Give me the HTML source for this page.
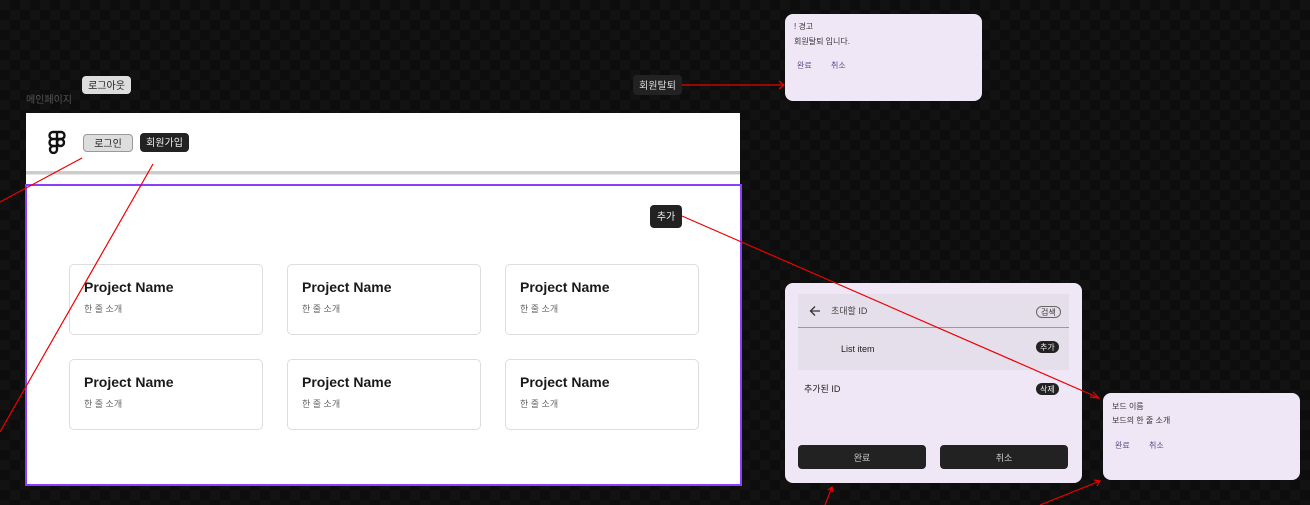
<!DOCTYPE html>
<html><head><meta charset="utf-8"><style>
*{margin:0;padding:0;box-sizing:border-box}
body{width:1310px;height:505px;overflow:hidden;background:#121212;position:relative;font-family:"Liberation Sans","Noto Sans CJK KR",sans-serif;
background-image:linear-gradient(45deg,#0d0d0d 25%,transparent 25%,transparent 75%,#0d0d0d 75%),linear-gradient(45deg,#0d0d0d 25%,transparent 25%,transparent 75%,#0d0d0d 75%);background-size:20px 20px;background-position:0 0,10px 10px}
.a{position:absolute}
.btn{position:absolute;font-size:10px;border-radius:4px;display:flex;align-items:center;justify-content:center;height:18px;line-height:1;padding-top:3px}
.card{position:absolute;width:194px;height:71px;border:1px solid #ddd;border-radius:5px;background:#fff}
.card b{position:absolute;left:14px;top:14px;font-size:14px;color:#1a1a1a}
.card span{position:absolute;left:14px;top:37px;font-size:9px;color:#666}
.dlg{position:absolute;background:#efe7f6;border-radius:8px}
.t{position:absolute;font-size:8px;color:#333;line-height:1}
.p{position:absolute;font-size:8px;color:#5a4a8a;line-height:1}
.pill{position:absolute;font-size:8px;border-radius:6px;height:12px;display:flex;align-items:center;padding:2px 4px 0;line-height:1}
</style></head><body>
<div class="a" style="left:26px;top:95px;font-size:10px;color:#555;line-height:12px">메인페이지</div>
<div class="btn" style="left:82px;top:76px;width:49px;background:#ddd;color:#222">로그아웃</div>
<div class="a" style="left:26px;top:113px;width:714px;height:372px;background:#fff"></div>
<div class="a" style="left:26px;top:171px;width:714px;height:4px;background:#ccc;border-bottom:1px solid #e6e6e6"></div>
<svg class="a" style="left:47px;top:130px" width="20" height="24" viewBox="0 0 20 24"><g fill="none" stroke="#111" stroke-width="2.4"><path d="M10 2H6a3.5 3.5 0 0 0 0 7h4zM10 2h4a3.5 3.5 0 0 1 0 7h-4zM10 9H6a3.5 3.5 0 0 0 0 7h4zM10 16H6a3.5 3.5 0 1 0 4 3.5z"/><circle cx="13.5" cy="12.5" r="3.5"/></g></svg>
<div class="btn" style="left:83px;top:134px;width:50px;background:#ddd;border:1px solid #999;color:#222">로그인</div>
<div class="btn" style="left:140px;top:133px;width:49px;height:19px;background:#222;color:#eee">회원가입</div>
<div class="a" style="left:25px;top:184px;width:717px;height:302px;border:2px solid #8a3ffc"></div>
<div class="btn" style="left:650px;top:205px;width:32px;height:23px;background:#222;color:#eee">추가</div>
<div class="card" style="left:69px;top:264px"><b>Project Name</b><span>한 줄 소개</span></div>
<div class="card" style="left:287px;top:264px"><b>Project Name</b><span>한 줄 소개</span></div>
<div class="card" style="left:505px;top:264px"><b>Project Name</b><span>한 줄 소개</span></div>
<div class="card" style="left:69px;top:359px"><b>Project Name</b><span>한 줄 소개</span></div>
<div class="card" style="left:287px;top:359px"><b>Project Name</b><span>한 줄 소개</span></div>
<div class="card" style="left:505px;top:359px"><b>Project Name</b><span>한 줄 소개</span></div>

<div class="btn" style="left:633px;top:75px;width:49px;height:20px;background:#222;color:#ddd">회원탈퇴</div>
<div class="dlg" style="left:785px;top:14px;width:197px;height:87px">
<div class="t" style="left:9px;top:9px">! 경고</div><div class="t" style="left:9px;top:24px">회원탈퇴 입니다.</div>
<div class="p" style="left:12px;top:48px">완료</div><div class="p" style="left:46px;top:48px">취소</div></div>

<div class="dlg" style="left:785px;top:283px;width:297px;height:200px">
<div class="a" style="left:13px;top:11px;width:271px;height:76px;background:#e5deeb"></div>
<div class="a" style="left:13px;top:44px;width:271px;height:1px;background:#999"></div>
<svg class="a" style="left:24px;top:22px" width="12" height="12" viewBox="0 0 12 12"><path d="M11 6H2M6 1.5L1.5 6 6 10.5" fill="none" stroke="#333" stroke-width="1.3"/></svg>
<div class="t" style="left:46px;top:24px;font-size:9px;color:#444">초대할 ID</div>
<div class="pill" style="left:251px;top:23px;border:1px solid #666;color:#333">검색</div>
<div class="t" style="left:56px;top:62px;font-size:9px;color:#222">List item</div>
<div class="pill" style="left:251px;top:58px;background:#222;color:#eee">추가</div>
<div class="t" style="left:19px;top:102px;font-size:9px;color:#222">추가된 ID</div>
<div class="pill" style="left:251px;top:100px;background:#222;color:#eee">삭제</div>
<div class="btn" style="left:13px;top:162px;width:128px;height:24px;background:#222;color:#ccc;font-size:9px">완료</div>
<div class="btn" style="left:155px;top:162px;width:128px;height:24px;background:#222;color:#ccc;font-size:9px">취소</div></div>

<div class="dlg" style="left:1103px;top:393px;width:197px;height:87px">
<div class="t" style="left:9px;top:10px">보드 이름</div><div class="t" style="left:9px;top:24px">보드의 한 줄 소개</div>
<div class="p" style="left:12px;top:49px">완료</div><div class="p" style="left:46px;top:49px">취소</div></div>

<svg class="a" style="left:0;top:0" width="1310" height="505"><g stroke="#e00" stroke-width="1.2" fill="none">
<path d="M82 158L0 202"/><path d="M153 164L0 432"/>
<path d="M682 216L1099 398M1090 397l9 1-6-6"/>
<path d="M682 85H784M779 81l5 4-5 4"/>
<path d="M825 505L832 487M828 490l4-3 1 5"/>
<path d="M1040 505L1100 481M1094 480l6 1-3 5"/></g></svg>
</body></html>
